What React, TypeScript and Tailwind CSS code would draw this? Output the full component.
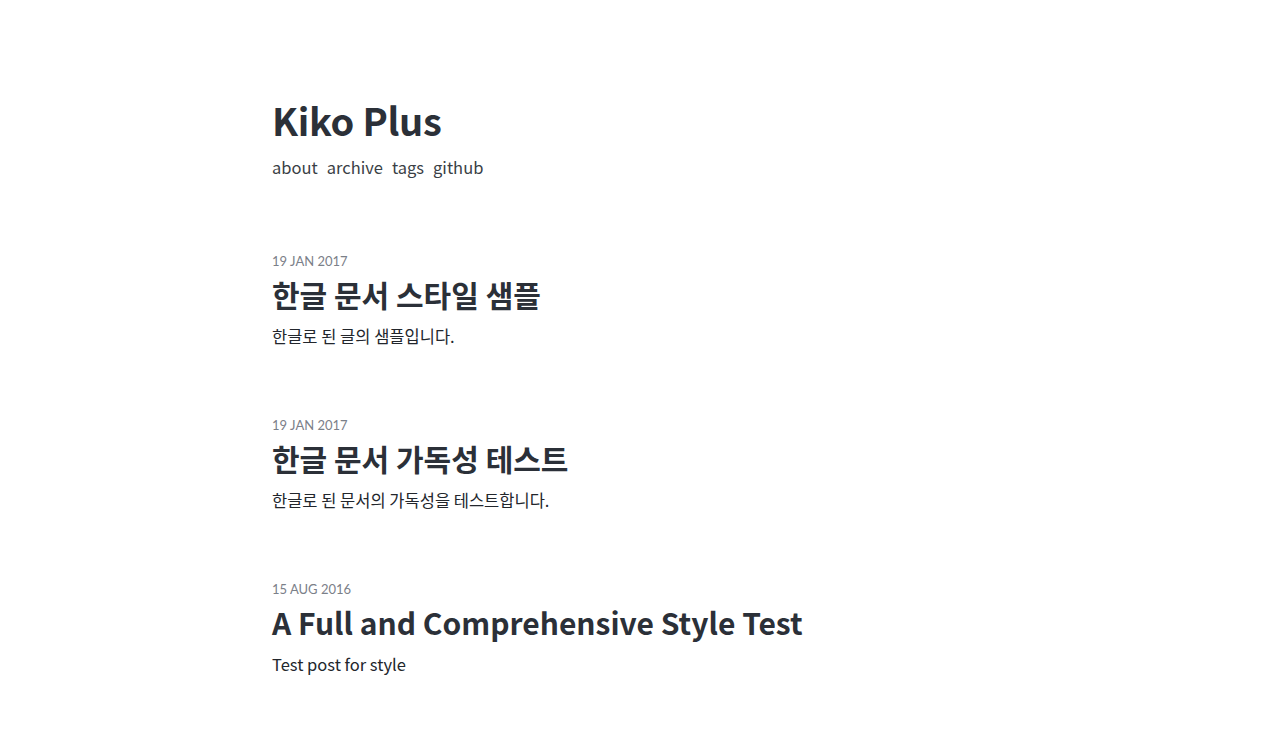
const posts = [
  { date: "19 JAN 2017", title: "한글 문서 스타일 샘플", desc: "한글로 된 글의 샘플입니다." },
  { date: "19 JAN 2017", title: "한글 문서 가독성 테스트", desc: "한글로 된 문서의 가독성을 테스트합니다." },
  { date: "15 AUG 2016", title: "A Full and Comprehensive Style Test", desc: "Test post for style" },
];

const sans = "font-['Noto_Sans_CJK_KR','Noto_Sans',sans-serif]";

export default function App() {
  return (
    <div className={`min-h-screen bg-white text-[#2b3038] ${sans}`}>
      <div className="mx-auto w-[736px] pt-[97px]">
        <header>
          <h1 className="text-[38px] font-bold leading-[46px] tracking-[-0.3px]">Kiko Plus</h1>
          <nav className="mt-[12px] flex gap-[9px] text-[16.5px] leading-[24px] text-[#3a3f46]">
            <a>about</a>
            <a>archive</a>
            <a>tags</a>
            <a>github</a>
          </nav>
        </header>
        <main className="mt-[73px] flex flex-col gap-[67px]">
          {posts.map((p) => (
            <article key={p.title}>
              <div className="font-['Lato',sans-serif] text-[13px] leading-[18px] text-[#7b8089]">{p.date}</div>
              <h2 className="mt-[5px] text-[30px] font-bold leading-[38px]">{p.title}</h2>
              <p className="mt-[10px] text-[16.5px] leading-[26px] text-[#22262c]">{p.desc}</p>
            </article>
          ))}
        </main>
      </div>
    </div>
  );
}
